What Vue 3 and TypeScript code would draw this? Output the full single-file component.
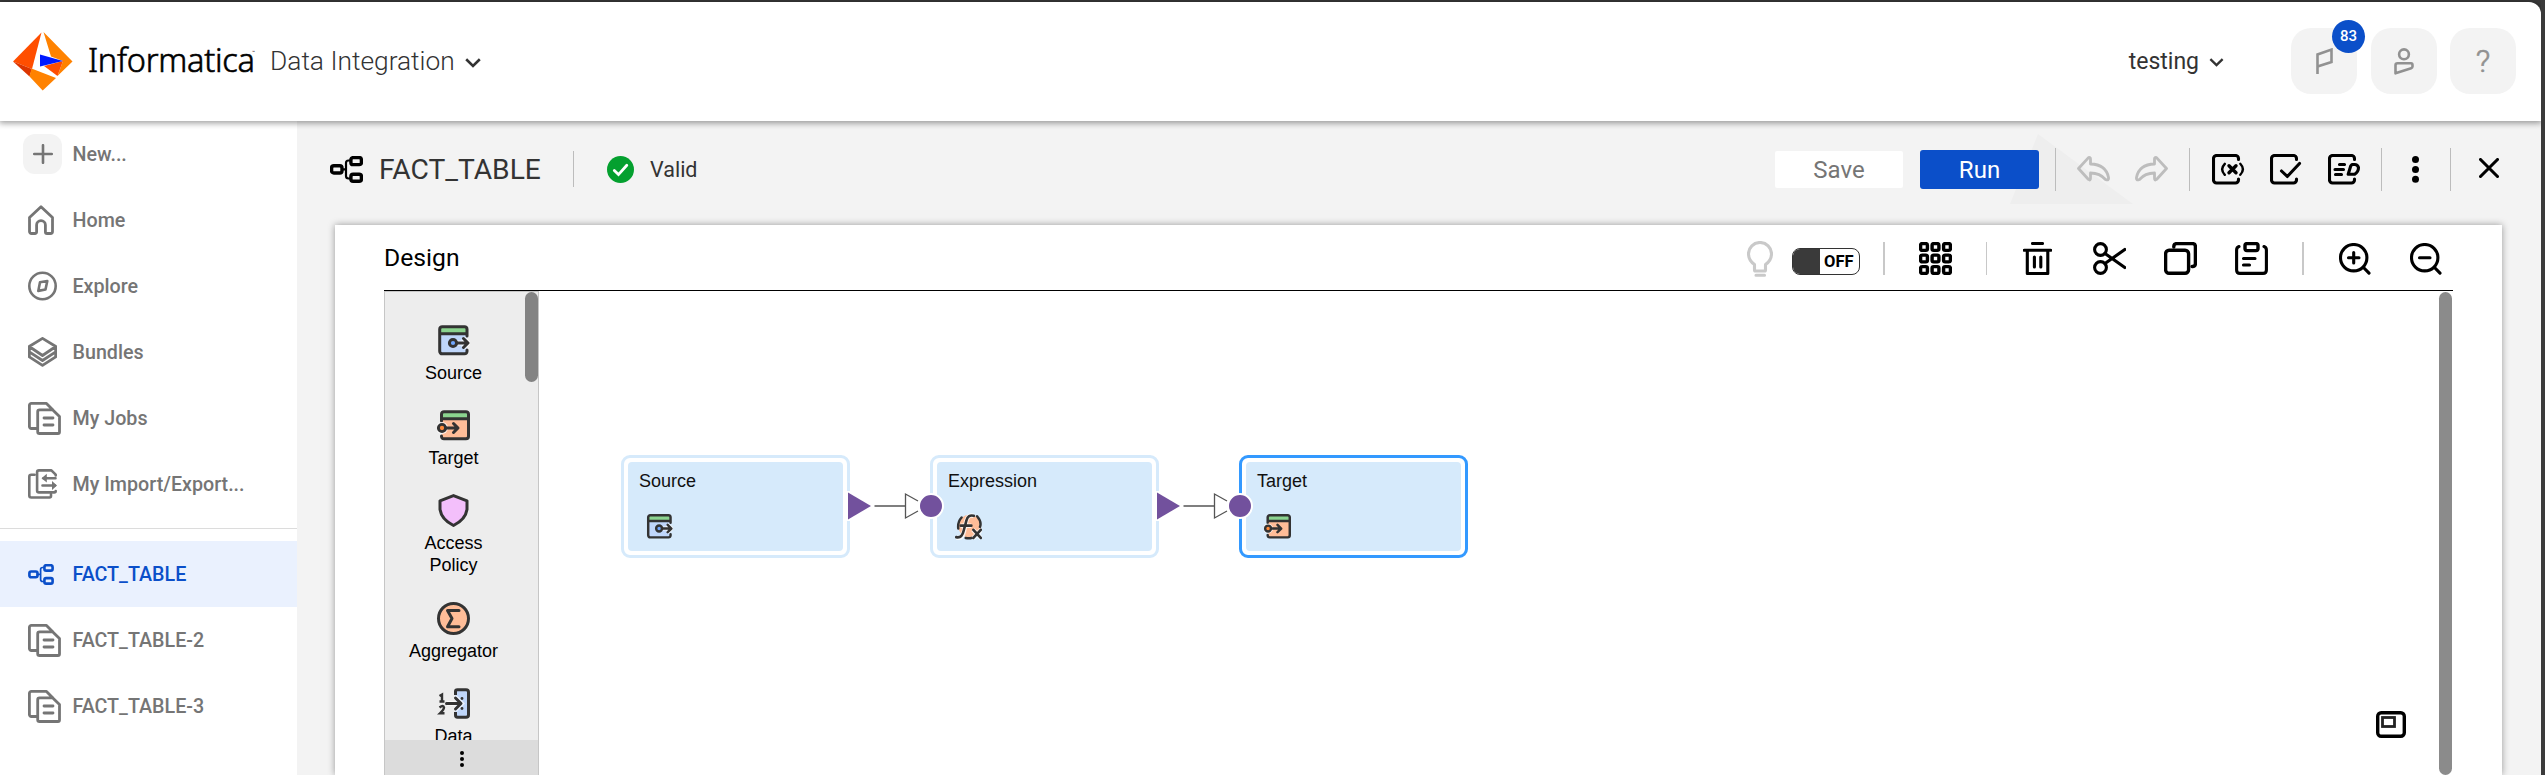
<script setup lang="ts">
interface NavItem {
  label: string
  icon: string
  size: [number, number]
  kind?: 'new' | 'active'
}

interface Transformation {
  label: string
  icon: string
  cls?: string
}

interface MapNode {
  id: string
  label: string
  icon: string
  x: number
  selected?: boolean
  input: boolean
  output: boolean
}

const mainNav: NavItem[] = [
  { label: 'New...', icon: 'plus', size: [20, 20], kind: 'new' },
  { label: 'Home', icon: 'home', size: [26, 30] },
  { label: 'Explore', icon: 'compass', size: [29, 30] },
  { label: 'Bundles', icon: 'layers', size: [29, 30] },
  { label: 'My Jobs', icon: 'docs', size: [33, 33] },
  { label: 'My Import/Export...', icon: 'transfer', size: [29, 30] },
]

const openAssets: NavItem[] = [
  { label: 'FACT_TABLE', icon: 'mapping', size: [26, 21], kind: 'active' },
  { label: 'FACT_TABLE-2', icon: 'docs', size: [33, 33] },
  { label: 'FACT_TABLE-3', icon: 'docs', size: [33, 33] },
]

const palette: Transformation[] = [
  { label: 'Source', icon: 'source' },
  { label: 'Target', icon: 'target' },
  { label: 'Access Policy', icon: 'shield', cls: 'two-line' },
  { label: 'Aggregator', icon: 'sigma' },
  { label: 'Data', icon: 'data', cls: 'two-line' },
]

const nodes: MapNode[] = [
  { id: 'src', label: 'Source', icon: 'source', x: 82, input: false, output: true },
  { id: 'exp', label: 'Expression', icon: 'fx', x: 391, input: true, output: true },
  { id: 'tgt', label: 'Target', icon: 'target', x: 700, selected: true, input: true, output: false },
]
</script>

<template>
  <div class="window">
    <svg class="defs" aria-hidden="true">
      <symbol id="plus" viewBox="0 0 20 20"><path d="M10 1.2V18.8M1.2 10H18.8" class="s26" /></symbol>
      <symbol id="home" viewBox="0 0 26 30">
        <path d="M1.5 12.6 13 1.8 24.5 12.6V26.5a2 2 0 0 1-2 2H19a1.6 1.6 0 0 1-1.6-1.6V20a4.4 4.4 0 0 0-8.8 0v6.9A1.6 1.6 0 0 1 7 28.500H3.500a2 2 0 0 1-2-2Z" class="s28" />
      </symbol>
      <symbol id="compass" viewBox="0 0 29 30">
        <circle cx="14.500" cy="15" r="13.200" class="s26" /><path d="M12 11.300 19.300 10 17.500 18.500 10.300 19.900Z" class="s26" />
      </symbol>
      <symbol id="layers" viewBox="0 0 29 30">
        <path d="M14.500 1.400 27.800 9.500 14.500 18.500 1.200 9.500ZM1.300 10V19.900L14.500 28.400 27.700 19.900V10M1.300 14.800 14.500 23.500 27.700 14.800" class="s28" />
      </symbol>
      <symbol id="docs" viewBox="0 0 33 33">
        <path d="M9 26.500H3.400a2 2 0 0 1-2-2V3.400a2 2 0 0 1 2-2H18.500L25 8M11.500 7.900H24.800L31.500 14.500V30a1.500 1.500 0 0 1-1.500 1.500H11.500A1.800 1.800 0 0 1 9.700 29.700V9.700A1.800 1.800 0 0 1 11.500 7.900ZM16 16H25M16 23H25" class="s28" />
      </symbol>
      <symbol id="transfer" viewBox="0 0 29 30">
        <path d="M6.500 5.800H3.300a2 2 0 0 0-2 2V26.500a2 2 0 0 0 2 2H21.500a1.500 1.500 0 0 0 1.500-1.500V25.500M27.700 6.500V5.700L23.400 1.400H11A1.900 1.900 0 0 0 9.100 3.300V21.500A1.900 1.900 0 0 0 11 23.400H26.300A1.400 1.400 0 0 0 27.700 22M15.500 9.200H27.500M14.500 16.500H27" class="s26" />
        <path d="M13.500 9.200 18.800 4.800V13.600ZM29 16.500 24 12.100V20.900Z" fill="currentColor" />
      </symbol>
      <symbol id="mapping" viewBox="0 0 33 27">
        <rect x="1.600" y="9.700" width="10.400" height="7.300" rx="2.200" class="s32" /><rect x="20.900" y="1.600" width="10.500" height="7" rx="2.200" class="s32" /><rect x="20.900" y="18.200" width="10.500" height="7" rx="2.200" class="s32" />
        <path d="M12 13.400H16M20 4.500H18.500Q16 4.500 16 7V20Q16 22.500 18.500 22.500H20" class="s22" />
      </symbol>
      <symbol id="flag" viewBox="0 0 17 27"><path d="M1.500 26V6.500L15.500 1.600V14L1.500 18.500" class="s26 square" /></symbol>
      <symbol id="user" viewBox="0 0 20 27">
        <circle cx="10" cy="6.300" r="4.900" class="s26" /><path d="M3.500 15.300H17Q18.500 15.300 18.500 17V18.500Q18.500 19.800 17.200 20.200L1.500 25.300V17.300Q1.500 15.300 3.500 15.300Z" class="s26" />
      </symbol>
      <symbol id="chevron" viewBox="0 0 16 10"><path d="M1.200 1.300 8 8 14.800 1.300" class="s26 square" /></symbol>
      <symbol id="valid" viewBox="0 0 27 27"><circle cx="13.500" cy="13.500" r="13.500" fill="#04a02f" /><path d="M7.300 14.500 11.500 18.600 19.800 9.300" fill="none" stroke="#fff" stroke-width="2.800" stroke-linecap="round" /></symbol>
      <symbol id="undo" viewBox="0 0 33 26">
        <path d="M1.500 12.500 11.500 1.600Q13.500 1 13.500 3V8Q29 8.500 31.500 21.500Q32 25 28.500 23.500Q23 17 13.500 17V22Q13.500 25 11.500 23.500Z" class="s28" />
      </symbol>
      <symbol id="params" viewBox="0 0 33 31">
        <path d="M26.500 5.500V4.500a3 3 0 0 0-3-3H4.500a3 3 0 0 0-3 3V26a3 3 0 0 0 3 3H23.500a3 3 0 0 0 3-3V25" class="s30" /><path d="M17 11.800 24 18.800M24 11.800 17 18.800" class="s32" /><path d="M12.800 9.800Q7.500 15.300 12.800 20.800M28.300 9.800Q33.500 15.300 28.300 20.800" class="s24" />
      </symbol>
      <symbol id="check" viewBox="0 0 33 31">
        <path d="M26.500 5.500V4.500a3 3 0 0 0-3-3H4.500a3 3 0 0 0-3 3V26a3 3 0 0 0 3 3H23.500a3 3 0 0 0 3-3V25M11.500 17 17.300 22.500 29.500 9.500" class="s30" />
      </symbol>
      <symbol id="edit" viewBox="0 0 33 31">
        <path d="M26.500 5.500V4.500a3 3 0 0 0-3-3H4.500a3 3 0 0 0-3 3V26a3 3 0 0 0 3 3H23.500a3 3 0 0 0 3-3V25M11.500 10.500H16.500M7 15.500H15.500M7.500 20.500H13.500M22.700 12 20.200 20.300H26.500Q30.500 18 30.500 13.500Q29.500 10.500 26.800 10.500H24Z" class="s30" />
      </symbol>
      <symbol id="more" viewBox="0 0 7 27"><circle cx="3.500" cy="3.500" r="3.500" /><circle cx="3.500" cy="13.500" r="3.500" /><circle cx="3.500" cy="23.200" r="3.500" /></symbol>
      <symbol id="close" viewBox="0 0 20 20"><path d="M1.500 1.500 18.500 18.500M18.500 1.500 1.500 18.500" class="s30" /></symbol>
      <symbol id="bulb" viewBox="0 0 26 36">
        <path d="M7.500 29V23.500Q1.500 19.500 1.500 12.700A11.500 11.200 0 0 1 24.500 12.700Q24.500 19.500 18.500 23.500V29Q18.500 30 17.500 30H8.500Q7.500 30 7.500 29ZM9 34.300H17.500" class="s30" />
      </symbol>
      <symbol id="grid" viewBox="0 0 33 33">
        <rect v-for="n in 9" :key="n" :x="1.600 + ((n - 1) % 3) * 11.500" :y="1.600 + Math.floor((n - 1) / 3) * 11.500" width="6.800" height="6.800" rx="1.600" class="s32" />
      </symbol>
      <symbol id="trash" viewBox="0 0 29 33"><path d="M9.500 1.500H19.500M1.300 8.300H27.700M4.300 9V31.500H24.800V9M11.400 15V25M17.800 15V25" class="s30" /></symbol>
      <symbol id="cut" viewBox="0 0 33 33">
        <circle cx="7.500" cy="7.500" r="5.900" class="s30" /><circle cx="7.500" cy="25.500" r="5.900" class="s30" /><path d="M12 11.500 31.800 25.500M12 21.500 31.800 7.500" class="s30" />
      </symbol>
      <symbol id="copy" viewBox="0 0 33 33">
        <rect x="1.600" y="8.300" width="23" height="23" rx="3.500" class="s32" /><path d="M9.800 5V4.500Q9.800 1.600 12.800 1.600H28.500Q31.400 1.600 31.400 4.600V21.500Q31.400 24.500 28.500 24.500H28" class="s32" />
      </symbol>
      <symbol id="paste" viewBox="0 0 33 33">
        <rect x="10" y="1.600" width="13" height="7" rx="2" class="s32" /><path d="M4 4.500Q1.600 5.200 1.600 8V28Q1.600 31.400 5 31.400H28Q31.400 31.400 31.400 28V8Q31.400 5.200 29 4.500M8.500 16.500H20M8.500 23H14.500" class="s30" />
      </symbol>
      <symbol id="zoom-in" viewBox="0 0 32 32"><circle cx="14.700" cy="14.700" r="13.200" class="s30" /><path d="M24.500 24.500 30 30.200M14.700 9.500V20M9.500 14.700H20" class="s30" /></symbol>
      <symbol id="zoom-out" viewBox="0 0 32 32"><circle cx="14.700" cy="14.700" r="13.200" class="s30" /><path d="M24.500 24.500 30 30.200M9.500 14.700H20" class="s30" /></symbol>
      <symbol id="overview" viewBox="0 0 30 27"><rect x="1.700" y="1.700" width="26.600" height="23.600" rx="3.500" class="s32" /><rect x="6.500" y="6.500" width="12" height="9" fill="none" stroke="#222" stroke-width="2.800" /></symbol>
      <symbol id="source" viewBox="0 0 33 33">
        <rect x="3" y="3" width="27" height="27" rx="3" fill="#bfd6fa" /><path d="M3 9V5Q3 3 5 3H28Q30 3 30 5V9Z" fill="#8bd48f" />
        <path d="M30 12V5A2.500 2.500 0 0 0 27.500 2.700H5.200A2.500 2.500 0 0 0 2.700 5.200V27.300A2.500 2.500 0 0 0 5.200 29.800H27.500A2.500 2.500 0 0 0 30 27.500V26M3 9.800H30" class="dk" />
        <path d="M16 19H30M26 14 31 19 26 24" stroke="#fff" stroke-width="5" fill="none" opacity=".8" /><circle cx="16" cy="19" r="3.600" class="dk dot" /><path d="M19.600 19H30.500M26.500 14.500 31 19 26.500 23.500" class="dk" />
      </symbol>
      <symbol id="target" viewBox="0 0 33 33">
        <rect x="5" y="3" width="26" height="27" rx="3" fill="#ffbd98" /><path d="M4.500 9V5Q4.500 3 6.500 3H29Q31 3 31 5V9Z" fill="#8bd48f" />
        <path d="M4.500 12V5.200A2.500 2.500 0 0 1 7 2.700H29A2.500 2.500 0 0 1 31.500 5.200V27.300A2.500 2.500 0 0 1 29 29.800H7A2.500 2.500 0 0 1 4.500 27.500V27M4.500 9.800H31" class="dk" />
        <circle cx="5" cy="19" r="6" fill="#fff" opacity=".8" /><circle cx="5" cy="19" r="3.600" stroke="#333" stroke-width="2.900" fill="#ff8b3d" /><path d="M8.600 19H20M16.500 14.500 21 19 16.500 23.500" class="dk" />
      </symbol>
      <symbol id="shield" viewBox="0 0 33 33"><path d="M16.500 1.600 30 6.800V15.500Q28.500 25.500 16.500 31.500Q4.500 25.500 3 15.500V6.800Z" fill="#f3bffb" stroke="#333" stroke-width="3" stroke-linejoin="round" /></symbol>
      <symbol id="sigma" viewBox="0 0 33 33"><circle cx="16.500" cy="16.500" r="15" fill="#ffbd98" stroke="#333" stroke-width="3" /><path d="M22 8.500H10.500L15 16.500 10.500 24.700H22" class="dk" /></symbol>
      <symbol id="data" viewBox="0 0 33 33">
        <path d="M18.500 8V4.500Q18.500 2.700 20.500 2.700H29Q31.500 2.700 31.500 5V28Q31.500 30.300 29 30.300H20.500Q18.500 30.300 18.500 28V25" fill="#bfd6fa" stroke="#333" stroke-width="3" />
        <path d="M10 16.500H21M18 10 24.500 16.500 18 23" fill="none" stroke="#fff" stroke-width="5" opacity=".7" />
        <path d="M9.500 16.500H22.500M18.500 11 24 16.500 18.500 22" class="dk" /><path d="M2.500 9 5 7.500V14M2.500 14.500H7.500M2.500 20.500Q6.500 17.500 7 20.500Q7 22.500 3 26.300H7.500" fill="none" stroke="#333" stroke-width="2.400" /><circle cx="25" cy="11.500" r="1.400" fill="#333" /><circle cx="25" cy="21.500" r="1.400" fill="#333" />
      </symbol>
      <symbol id="fx" viewBox="0 0 33 33">
        <circle cx="18" cy="16" r="14" fill="#ffbd98" /><path d="M8 5.500Q3 11 4 19M27 4Q33 11 30.500 17M13 30.500Q18 31.500 21 30" class="dk" />
        <path d="M2 30Q9 32 11 22L14 9Q16 1.500 23 3.500M7 15.500H20M22 20.500 32 31M32 20.500 22 31" fill="none" stroke="#fff" stroke-width="5.500" opacity=".8" />
        <path d="M1.500 29.500Q8.500 31 10.500 22L14 9Q16 1.500 23 3.500M7 15.500H20M22.500 20.500 31.500 30.500M31.500 20.500 22.500 30.500" fill="none" stroke="#333" stroke-width="3.200" stroke-linecap="round" />
      </symbol>
    </svg>

    <header class="top">
      <svg class="logo" viewBox="0 0 60 60">
        <path d="M0 29.500 28.500.500 19 37Z" fill="#ff4e00" /><path d="M0 29.500 19 37 16.500 44.500Z" fill="#dc3500" />
        <path d="M30.500 0 59.500 29.500 44.500 44 50 29 38 24.500Z" fill="#ff8200" /><path d="M31 34 50 29 44.500 44Z" fill="#ff4e00" />
        <path d="M18.500 36.500 43 46 29.700 58.500 16.500 44.500Z" fill="#ff8200" /><path d="M27 22.500 50 29 27 34.500Z" fill="#0019ff" />
      </svg>
      <span class="brand">Informatica</span><span class="tm">™</span>
      <span class="product">Data Integration</span>
      <svg class="product-chevron"><use href="#chevron" /></svg>
      <div class="account">
        <span class="org">testing</span>
        <svg class="org-chevron"><use href="#chevron" /></svg>
        <button class="tile"><svg class="flag"><use href="#flag" /></svg><span class="badge">83</span></button>
        <button class="tile"><svg class="user"><use href="#user" /></svg></button>
        <button class="tile help">?</button>
      </div>
    </header>

    <div class="body">
      <nav class="side">
        <a v-for="item in mainNav" :key="item.label" class="nav" :class="item.kind">
          <span class="nav-icon"><svg :width="item.size[0]" :height="item.size[1]"><use :href="'#' + item.icon" /></svg></span>
          <span>{{ item.label }}</span>
        </a>
        <div class="rule"></div>
        <a v-for="item in openAssets" :key="item.label" class="nav" :class="item.kind">
          <span class="nav-icon"><svg :width="item.size[0]" :height="item.size[1]"><use :href="'#' + item.icon" /></svg></span>
          <span>{{ item.label }}</span>
        </a>
      </nav>

      <main class="main">
        <div class="titlebar">
          <svg class="title-icon"><use href="#mapping" /></svg>
          <h1>FACT_TABLE</h1>
          <i class="sep title-sep"></i>
          <svg class="valid-icon"><use href="#valid" /></svg>
          <span class="valid">Valid</span>
          <div class="actions">
            <svg class="watermark" viewBox="0 0 123 70"><path d="M28 0 123 70H0Z" /></svg>
            <button class="save">Save</button>
            <button class="run">Run</button>
            <i class="sep a1"></i>
            <svg class="history"><use href="#undo" /></svg>
            <svg class="history redo"><use href="#undo" /></svg>
            <i class="sep a2"></i>
            <svg class="act"><use href="#params" /></svg>
            <svg class="act"><use href="#check" /></svg>
            <svg class="act"><use href="#edit" /></svg>
            <i class="sep a3"></i>
            <svg class="more"><use href="#more" /></svg>
            <i class="sep a4"></i>
            <svg class="close"><use href="#close" /></svg>
          </div>
        </div>

        <section class="panel">
          <div class="panel-head">
            <h2>Design</h2>
            <div class="tools">
              <svg class="bulb"><use href="#bulb" /></svg>
              <span class="toggle"><i></i><b>OFF</b></span>
              <i class="bar b1"></i>
              <svg class="tool grid"><use href="#grid" /></svg>
              <i class="bar thin b2"></i>
              <svg class="tool trash"><use href="#trash" /></svg>
              <svg class="tool"><use href="#cut" /></svg>
              <svg class="tool"><use href="#copy" /></svg>
              <svg class="tool"><use href="#paste" /></svg>
              <i class="bar b3"></i>
              <svg class="mag"><use href="#zoom-in" /></svg>
              <svg class="mag last"><use href="#zoom-out" /></svg>
            </div>
          </div>
          <div class="work">
            <aside class="palette">
              <div class="list">
                <div v-for="t in palette" :key="t.label" class="entry" :class="t.cls">
                  <svg width="33" height="33"><use :href="'#' + t.icon" /></svg>
                  <span>{{ t.label }}</span>
                </div>
                <div class="thumb"></div>
              </div>
              <div class="palette-foot"><svg width="4" height="16" viewBox="0 0 4 16"><circle cx="2" cy="2" r="2" /><circle cx="2" cy="8" r="2" /><circle cx="2" cy="14" r="2" /></svg></div>
            </aside>
            <div class="canvas">
              <div v-for="n in nodes" :key="n.id" class="node" :class="{ selected: n.selected }" :style="{ left: n.x + 'px' }">
                <div class="face">
                  <span>{{ n.label }}</span>
                  <svg width="27" height="27"><use :href="'#' + n.icon" /></svg>
                </div>
                <svg v-if="n.output" class="out" viewBox="0 0 82 34">
                  <path d="M.500 17H7V2H0V32H7V17" fill="#fff" /><path d="M3 3.500 26 17 3 30.500Z" fill="#72519d" />
                  <path d="M29.500 17H60.500M73 12 60.500 5V29L73 22" fill="none" stroke="#555" stroke-width="1.300" />
                </svg>
                <span v-if="n.input" class="in"></span>
              </div>
              <svg class="overview"><use href="#overview" /></svg>
              <div class="scroll"></div>
            </div>
          </div>
        </section>
      </main>
    </div>
  </div>
</template>

<style>
body { background: #3a3a3a; }
</style>

<style scoped>
* { box-sizing: border-box; }
.window { width: 2541px; height: 775px; padding-top: 2px; display: flex; flex-direction: column; overflow: hidden; font-family: Roboto, "Liberation Sans", sans-serif; color: #333; }
.defs { position: absolute; width: 0; height: 0; }
svg { display: block; flex: none; overflow: visible; }
.s22, .s24, .s26, .s28, .s30, .s32 { fill: none; stroke: currentColor; stroke-linejoin: round; stroke-linecap: round; }
.s22 { stroke-width: 2.2; }
.s24 { stroke-width: 2.4; }
.s26 { stroke-width: 2.6; }
.s28 { stroke-width: 2.8; }
.s30 { stroke-width: 3.1; }
.s32 { stroke-width: 3.4; }
.square { stroke-linejoin: miter; stroke-linecap: butt; }
.dk { fill: none; stroke: #333; stroke-width: 3; stroke-linejoin: round; stroke-linecap: round; }
.dot { fill: #71a8ff; }
button { border: 0; padding: 0; font: inherit; color: inherit; display: flex; align-items: center; justify-content: center; flex: none; }
h1, h2 { margin: 0; font-weight: 400; }
i { display: block; flex: none; }

.top { position: relative; z-index: 2; flex: none; height: 119px; background: #fff; border-top-right-radius: 12px; box-shadow: 0 1px 6px 1px rgba(0, 0, 0, .4); display: flex; align-items: center; padding-left: 13px; }
.logo { width: 60px; height: 60px; }
.brand { margin: 0 0 4px 15px; width: 164px; font: 300 32.500px/40px "Noto Sans", sans-serif; -webkit-text-stroke: .6px #000; color: #000; letter-spacing: -.25px; white-space: nowrap; }
.tm { width: 7px; font-size: 5px; align-self: flex-start; margin-top: 47px; color: #000; }
.product { margin: 0 0 2px 11px; width: 184px; font-size: 26.350px; font-weight: 300; white-space: nowrap; }
.product-chevron { width: 16px; height: 10px; margin: 3px 0 0 11px; }
.account { margin-left: auto; margin-right: 25px; display: flex; align-items: center; padding-bottom: 1px; }
.org { font-size: 23px; }
.org-chevron { width: 15px; height: 9px; margin: 2px 67px 0 10px; }
.tile { position: relative; width: 66px; height: 66px; border-radius: 20px; background: #f3f3f3; color: #919191; }
.tile + .tile { margin-left: 13.500px; }
.flag { width: 17px; height: 27px; }
.user { width: 20px; height: 27px; }
.help { font-size: 32px; font-weight: 300; -webkit-text-stroke: .6px #919191; }
.badge { position: absolute; left: 41px; top: -8px; width: 33px; height: 33px; border-radius: 50%; background: #0b4fc9; color: #fff; font-size: 15px; font-weight: 500; line-height: 33px; text-align: center; }

.body { flex: 1; display: flex; min-height: 0; }
.side { width: 297px; flex: none; background: #fff; }
.nav { height: 66px; display: flex; align-items: center; font-size: 19.700px; font-weight: 500; color: #757575; white-space: nowrap; }
.nav-icon { width: 44.500px; margin-left: 28px; flex: none; display: flex; }
.new .nav-icon { margin: 0 10.500px 0 23px; width: 39px; height: 40px; border-radius: 12px; background: #f3f3f3; justify-content: center; align-items: center; }
.rule { height: 1px; margin: 11px 0 12px; background: #dcdcdc; }
.active { background: #eaf1fe; color: #0b4fc9; }

.main { flex: 1; min-width: 0; background: #f3f3f3; display: flex; flex-direction: column; }
.titlebar { height: 104px; flex: none; display: flex; align-items: center; padding: 0 42px 8px 33px; }
.title-icon { width: 33px; height: 27px; color: #000; }
h1 { width: 162px; margin-left: 16px; font-size: 28.200px; white-space: nowrap; font-weight: 400; }
.sep { width: 1px; height: 43px; background: #bcbcbc; }
.title-sep { margin-left: 32px; height: 36px; }
.valid-icon { width: 27px; height: 27px; margin-left: 33px; }
.valid { margin-left: 16px; font-size: 21.500px; }
.actions { position: relative; margin-left: auto; display: flex; align-items: center; color: #000; isolation: isolate; }
.watermark { position: absolute; z-index: -1; left: 235px; top: -14px; width: 123px; height: 70px; fill: #eee; }
.save { width: 128px; height: 37px; border-radius: 2px; background: #fff; color: #757575; font-size: 24px; padding-top: 1px; }
.run { width: 119px; height: 39px; margin-left: 17px; border-radius: 3px; background: #0b4fc9; color: #fff; font-size: 24px; padding-top: 1px; }
.a1 { margin-left: 16px; }
.history { width: 33px; height: 26px; margin-left: 21px; color: #bdbdbd; }
.redo { margin-left: 25px; transform: scaleX(-1); }
.a2 { margin: 0 22px 0 21px; }
.act { width: 33px; height: 31px; }
.act + .act { margin-left: 25px; }
.a3 { margin: 0 30px 0 20px; }
.more { width: 7px; height: 27px; }
.a4 { margin: 0 28px 0 31px; }
.close { width: 20px; height: 20px; margin-bottom: 2px; }

.panel { flex: 1; min-height: 0; margin: 0 39px 0 38px; padding: 0 49px; background: #fff; box-shadow: 0 0 7px rgba(0, 0, 0, .38); display: flex; flex-direction: column; }
.panel-head { height: 66px; flex: none; border-bottom: 1px solid #000; display: flex; align-items: center; color: #000; }
h2 { font-size: 24.700px; padding-bottom: 1px; }
.tools { margin-left: auto; margin-right: 11px; display: flex; align-items: center; padding-top: 2px; }
.bulb { width: 26px; height: 36px; margin-right: 19px; color: #c9c9c9; }
.toggle { width: 68px; height: 27px; margin-top: 5px; border: 1px solid #333; border-radius: 8px; display: flex; overflow: hidden; background: #fff; align-items: center; }
.toggle i { width: 27px; height: 27px; background: #3a3a3a; }
.toggle b { font-size: 16.500px; font-weight: 700; margin-left: 4px; }
.bar { width: 2px; height: 33px; background: #c8c8c8; }
.thin { width: 1px; }
.b1 { margin: 0 34px 0 23px; }
.tool { width: 33px; height: 33px; }
.tool + .tool { margin-left: 38px; }
.b2 { margin: 0 36px 0 34px; }
.trash { width: 29px; }
.trash + .tool { margin-left: 41px; }
.b3 { margin: 0 35px 0 34px; }
.mag { width: 32px; height: 32px; }
.last { margin-left: 39px; }

.work { flex: 1; min-height: 0; display: flex; }
.palette { width: 155px; flex: none; border: 1px solid #c6c6c6; border-bottom: 0; background: #ededed; display: flex; flex-direction: column; font: 18px/22px "Liberation Sans", Arial, sans-serif; color: #000; }
.list { position: relative; flex: 1; min-height: 0; overflow: hidden; padding: 32px 16px 0 0; }
.entry { height: 85px; display: flex; flex-direction: column; align-items: center; text-align: center; }
.entry span { margin-top: 5px; width: 110px; }
.two-line { height: 108px; }
.two-line span { width: 72px; }
.thumb { position: absolute; right: 0; top: 0; width: 13px; height: 90px; border-radius: 7px; background: #838383; }
.palette-foot { height: 35px; flex: none; background: #dcdcdc; display: flex; align-items: center; justify-content: center; padding-top: 2px; }
.canvas { position: relative; flex: 1; }
.node { position: absolute; top: 164px; width: 229px; height: 103px; border: 3px solid #d6eafb; border-radius: 9px; padding: 4px; background: #fff; font: 18px/22px "Liberation Sans", Arial, sans-serif; color: #111; }
.selected { border-color: #3399ff; }
.face { height: 100%; border-radius: 4px; background: #d6eafb; padding: 8px 11px; display: flex; flex-direction: column; gap: 21px; }
.face svg { margin-left: 7px; }
.out { position: absolute; left: 221px; top: 31px; width: 82px; height: 34px; }
.in { position: absolute; left: -15px; top: 35px; width: 26px; height: 26px; border-radius: 50%; border: 2px solid #fff; background: #72519d; }
.overview { position: absolute; right: 47px; top: 420px; width: 30px; height: 27px; color: #000; }
.scroll { position: absolute; right: 1px; top: 1px; bottom: 0; width: 13px; border-radius: 7px; background: #8b8b8b; }
</style>
